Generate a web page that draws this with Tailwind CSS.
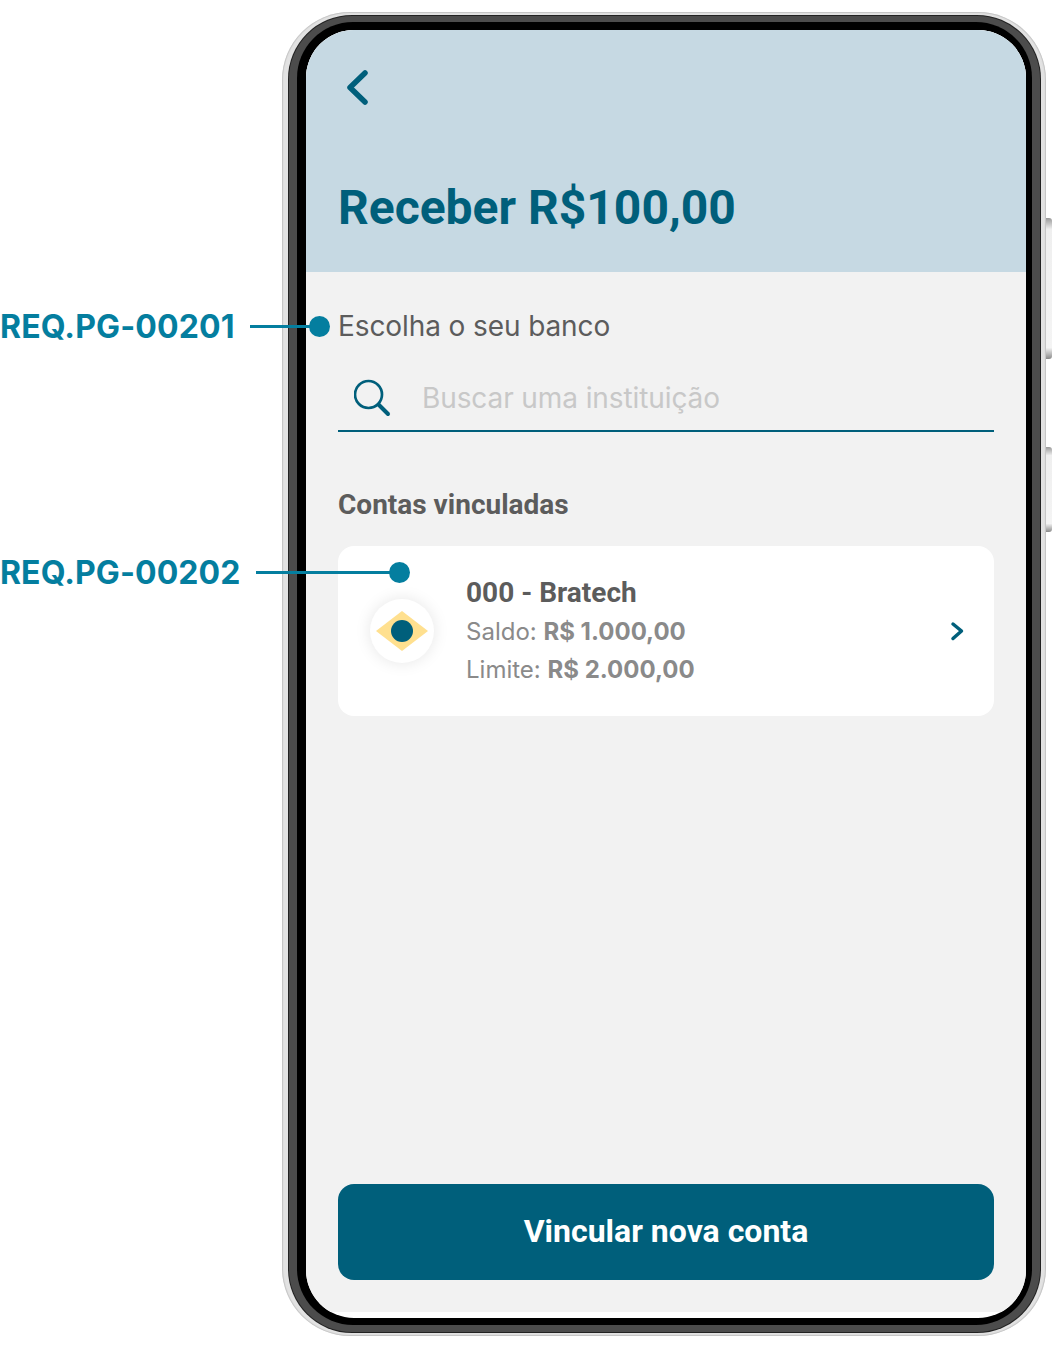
<!DOCTYPE html>
<html lang="en">
<head>
    <meta charset="UTF-8">
    <title>Receber</title>
    <script src="https://cdn.jsdelivr.net/npm/@tailwindcss/browser@4"></script>
</head>
<body class="bg-white">
    <main class="relative w-[1052px] h-[1348px] overflow-hidden bg-white font-['Roboto',sans-serif]">

        <!-- side buttons -->
        <div class="absolute left-[1046px] top-[218px] w-[6px] h-[141px] rounded-r-[3px] bg-[linear-gradient(to_bottom,#9a9a9a,#efefef_8%,#f4f4f4_92%,#8a8a8a)]"></div>
        <div class="absolute left-[1046px] top-[447px] w-[6px] h-[85px] rounded-r-[3px] bg-[linear-gradient(to_bottom,#9a9a9a,#efefef_10%,#f4f4f4_90%,#8a8a8a)]"></div>

        <!-- phone frame -->
        <div class="absolute left-[282px] top-[12px] w-[764px] h-[1324px] rounded-[68px] bg-[#e2e2e2] shadow-[inset_0_0_1px_1px_#c4c4c4] pl-[6px] pr-[5px] py-[3px]">
            <div class="h-full rounded-[64px] bg-[#222222] p-[1px]">
                <div class="h-full rounded-[63px] bg-[#4c4c4c] pl-[8px] pr-[8px] pt-[6px] pb-[7px]">
                    <div class="h-full rounded-[56px] bg-black pl-[9px] pr-[6px] pt-[8px] pb-[7px]">
                        <div class="flex h-full flex-col overflow-hidden rounded-[48px] bg-white">
                            <div class="flex h-[1282px] flex-col bg-[#f2f2f2]">

                                <header class="h-[242px] bg-[#c6d9e3] px-[32px] pt-[40px]">
                                    <svg class="block" width="40" height="36" viewBox="0 0 40 36" fill="none" stroke="#005f7b" stroke-width="5.500" stroke-linecap="round" stroke-linejoin="round"><path d="M27 3 L12 17.500 L27 32"/></svg>
                                    <h1 class="mt-[74px] text-[48px] leading-[56px] font-bold text-[#005f7b]">Receber R$100,00</h1>
                                </header>

                                <section class="flex flex-1 flex-col px-[32px]">
                                    <p class="mt-[37px] font-['Inter',sans-serif] text-[28px] leading-[34px] text-[#5c5c5c] tracking-[-0.1px]">Escolha o seu banco</p>

                                    <div class="mt-[36px] flex h-[53px] items-start border-b-2 border-[#005f7b] pl-[16px]">
                                        <svg class="shrink-0" width="38" height="38" viewBox="0 0 38 38" fill="none" stroke="#005f7b" stroke-linecap="round"><circle cx="14.500" cy="15.500" r="13.500" stroke-width="2.700"/><path d="M25 26 L34 35" stroke-width="4"/></svg>
                                        <span class="ml-[30px] font-['Inter',sans-serif] text-[28px] leading-[38px] text-[#c8c8c8] tracking-[-0.1px]">Buscar uma instituição</span>
                                    </div>

                                    <h2 class="mt-[56px] text-[28px] leading-[34px] font-bold text-[#5c5c5c]">Contas vinculadas</h2>

                                    <div class="mt-[24px] flex h-[170px] items-center rounded-[16px] bg-white pl-[32px] pr-[29px]">
                                        <div class="flex h-[64px] w-[64px] shrink-0 items-center justify-center rounded-full bg-white shadow-[0_0_16px_rgba(0,0,0,0.10)]">
                                            <svg width="54" height="40" viewBox="0 0 54 40"><polygon points="27,0 53,20 27,40 1,20" fill="#ffe08f"/><circle cx="27" cy="20" r="11" fill="#005f7b"/></svg>
                                        </div>
                                        <div class="ml-[32px] flex-1 pt-[1px]">
                                            <p class="text-[28px] leading-[38px] font-bold text-[#5c5c5c]">000 - Bratech</p>
                                            <p class="mt-[1px] font-['Inter',sans-serif] text-[24px] leading-[38px] text-[#8a8a8a]">Saldo: <b class="font-bold">R$ 1.000,00</b></p>
                                            <p class="font-['Inter',sans-serif] text-[24px] leading-[38px] text-[#8a8a8a]">Limite: <b class="font-bold">R$ 2.000,00</b></p>
                                        </div>
                                        <svg width="16" height="24" viewBox="0 0 16 24" fill="none" stroke="#005f7b" stroke-width="3.500" stroke-linecap="round" stroke-linejoin="round"><path d="M4 5 L12.500 12 L4 19.500"/></svg>
                                    </div>

                                    <button class="mt-auto mb-[32px] h-[96px] w-full rounded-[16px] bg-[#005f7b] pb-[2px] text-[32px] font-bold text-white">Vincular nova conta</button>
                                </section>
                            </div>
                        </div>
                    </div>
                </div>
            </div>
        </div>

        <!-- annotations -->
        <div class="absolute left-0 top-[306px] flex h-[40px] items-center">
            <span class="w-[250px] pt-[2px] font-['Inter',sans-serif] text-[32px] leading-[42px] font-bold text-[#047e9f] tracking-[0.15px]">REQ.PG-00201</span>
            <span class="h-[3px] w-[60px] bg-[#047e9f]"></span>
            <span class="-ml-[1px] h-[21px] w-[21px] rounded-full bg-[#047e9f]"></span>
        </div>
        <div class="absolute left-0 top-[552px] flex h-[40px] items-center">
            <span class="w-[256px] pt-[2px] font-['Inter',sans-serif] text-[32px] leading-[42px] font-bold text-[#047e9f] tracking-[0.1px]">REQ.PG-00202</span>
            <span class="h-[3px] w-[134px] bg-[#047e9f]"></span>
            <span class="-ml-[1px] h-[21px] w-[21px] rounded-full bg-[#047e9f]"></span>
        </div>
    </main>
</body>
</html>
